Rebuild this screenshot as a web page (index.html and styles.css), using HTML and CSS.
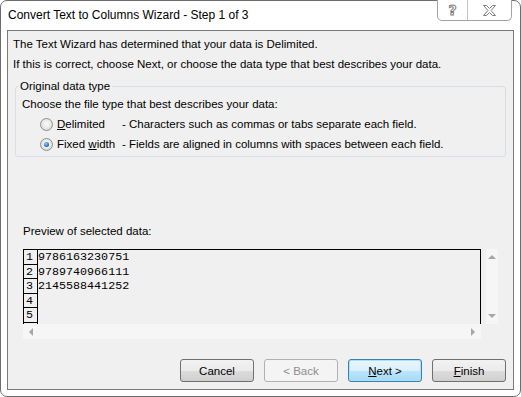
FILE: index.html
```html
<!DOCTYPE html>
<html lang="en">
<head>
    <meta charset="UTF-8">
    <title>Convert Text to Columns Wizard - Step 1 of 3</title>
    <link rel="stylesheet" href="styles.css">
</head>
<body>
    <div class="window">
        <!-- Title bar -->
        <div class="titlebar">
            <div class="title">Convert Text to Columns Wizard - Step 1 of 3</div>
            <div class="caption-buttons">
                <div class="cap help">?</div>
                <div class="cap close">
                    <svg width="13" height="11" viewBox="0 0 13 11">
                        <polygon points="0.5,0.5 3.5,0.5 6.5,3.5 9.5,0.5 12.5,0.5 8,5.5 12.5,10.5 9.5,10.5 6.5,7.5 3.5,10.5 0.5,10.5 5,5.5" fill="#fff" stroke="#7d7d7d" stroke-width="1"/>
                    </svg>
                </div>
            </div>
        </div>

        <div class="client">
            <div class="intro">
                <p>The Text Wizard has determined that your data is Delimited.</p>
                <p>If this is correct, choose Next, or choose the data type that best describes your data.</p>
            </div>

            <fieldset class="group">
                <legend>Original data type</legend>
                <p>Choose the file type that best describes your data:</p>
                <div class="option">
                    <span class="radio"></span>
                    <span class="opt-label"><u>D</u>elimited</span>
                    <span>- Characters such as commas or tabs separate each field.</span>
                </div>
                <div class="option">
                    <span class="radio on"></span>
                    <span class="opt-label">Fixed <u>w</u>idth</span>
                    <span>- Fields are aligned in columns with spaces between each field.</span>
                </div>
            </fieldset>

            <p class="preview-label">Preview of selected data:</p>

            <div class="preview">
                <div class="data">
                    <div class="line-nums">
                        <div>1</div>
                        <div>2</div>
                        <div>3</div>
                        <div>4</div>
                        <div>5</div>
                    </div>
                    <div class="lines">
                        <div>9786163230751</div>
                        <div>9789740966111</div>
                        <div>2145588441252</div>
                    </div>
                </div>
                <div class="vscroll">
                    <span class="arrow up"></span>
                    <span class="arrow down"></span>
                </div>
                <div class="hscroll">
                    <span class="arrow left"></span>
                    <span class="arrow right"></span>
                </div>
            </div>

            <div class="buttons">
                <button class="btn">Cancel</button>
                <button class="btn" disabled>&lt; Back</button>
                <button class="btn default"><u>N</u>ext &gt;</button>
                <button class="btn"><u>F</u>inish</button>
            </div>
        </div>
    </div>
</body>
</html>
```

FILE: styles.css
```css
body {
    margin: 0;
    font-family: "Liberation Sans", Arial, sans-serif;
    font-size: 11.5px;
    color: #000;
    background: #fff;
}
p {
    margin: 0;
}
.window {
    width: 521px;
    height: 397px;
    box-sizing: border-box;
    border: 1px solid #6d6d6d;
    border-radius: 7px;
    background: #fff;
    display: flex;
    flex-direction: column;
}
.titlebar {
    height: 29px;
    display: flex;
    align-items: flex-start;
}
.title {
    font-size: 12px;
    line-height: 28px;
    padding-left: 7px;
}
.caption-buttons {
    margin-left: auto;
    margin-right: 8px;
    margin-top: -1px;
    display: flex;
    height: 20px;
    border: 1px solid #a3a3a3;
    border-top: none;
    border-radius: 0 0 5px 5px;
    background: #fff;
}
.cap {
    display: flex;
    align-items: center;
    justify-content: center;
}
.help {
    width: 29px;
    font-family: "DejaVu Sans", sans-serif;
    font-size: 14px;
    font-weight: bold;
    color: #fff;
    -webkit-text-stroke: 1px #7d7d7d;
}
.close {
    width: 43px;
    border-left: 1px solid #c4c4c4;
}

/* client area */
.client {
    margin: 0 6px;
    height: 360px;
    box-sizing: border-box;
    border: 1px solid #7a7a7a;
    background: #f0f0f0;
    display: flex;
    flex-direction: column;
}
.intro {
    padding: 3px 0 0 5px;
    line-height: 20px;
}
.group {
    margin: 5px 7px 0 7px;
    padding: 1px 6px 2px 6px;
    border: 1px solid #d5dfe5;
    border-radius: 3px;
    line-height: 20px;
}
.group legend {
    padding: 0 2px;
    margin-left: -4px;
    line-height: 14px;
}
.option {
    display: flex;
    align-items: center;
    padding-left: 18px;
    height: 20px;
}
.radio {
    width: 13px;
    height: 13px;
    box-sizing: border-box;
    border: 1px solid #8e8f8f;
    border-radius: 50%;
    background: radial-gradient(circle at 50% 45%, #fbfbfb 0%, #e6e6e6 55%, #cfcfcf 100%);
    margin-right: 4px;
    display: flex;
    align-items: center;
    justify-content: center;
}
.radio.on::after {
    content: "";
    width: 5px;
    height: 5px;
    border-radius: 50%;
    background: radial-gradient(circle at 40% 35%, #8fd0ff 0%, #2b73c4 60%, #13427f 100%);
}
.opt-label {
    width: 65px;
}
.preview-label {
    margin: 64px 0 0 15px;
    line-height: 20px;
}

/* preview box */
.preview {
    margin: 8px 0 0 15px;
    width: 475px;
    display: grid;
    grid-template-columns: 458px 17px;
    grid-template-rows: 75px 15px;
}
.data {
    box-sizing: border-box;
    border: 1px solid #000;
    border-bottom: none;
    display: flex;
    overflow: hidden;
    font-family: "Liberation Mono", "Courier New", monospace;
    font-size: 11.7px;
}
.line-nums {
    width: 13px;
    border-right: 1px solid #000;
}
.line-nums div {
    height: 14.5px;
    box-sizing: border-box;
    border-bottom: 1px solid #000;
    line-height: 15px;
    padding-left: 2px;
}
.lines div {
    height: 14.5px;
    line-height: 15px;
}
.vscroll {
    margin-left: 5px;
    background: #f6f6f6;
    display: flex;
    flex-direction: column;
    justify-content: space-between;
    align-items: center;
    padding: 6px 0 6px;
}
.hscroll {
    background: #f6f6f6;
    display: flex;
    justify-content: space-between;
    align-items: center;
    padding: 0 6px;
}
.arrow {
    width: 0;
    height: 0;
    border: 4px solid transparent;
}
.arrow.up {
    border-bottom-color: #a6a6a6;
    border-top-width: 0;
}
.arrow.down {
    border-top-color: #a6a6a6;
    border-bottom-width: 0;
}
.arrow.left {
    border-right-color: #a6a6a6;
    border-left-width: 0;
}
.arrow.right {
    border-left-color: #a6a6a6;
    border-right-width: 0;
}

/* buttons */
.buttons {
    margin-top: auto;
    display: flex;
    justify-content: flex-end;
    gap: 10px;
    padding: 0 7px 7px 0;
}
.btn {
    width: 74px;
    height: 23px;
    font-family: inherit;
    font-size: 11.5px;
    color: #000;
    border: 1px solid #707070;
    border-radius: 3px;
    background: linear-gradient(#f2f2f2 0%, #ebebeb 50%, #dddddd 51%, #cfcfcf 100%);
    padding: 0;
}
.btn:disabled {
    color: #8d8d8d;
    border-color: #adb2b5;
    background: #f4f4f4;
}
.btn.default {
    border-color: #3c7fb1;
    background: linear-gradient(#eaf6fd 0%, #d9f0fc 50%, #bee6fd 51%, #a7d9f5 100%);
    box-shadow: inset 0 0 0 1px #a7e2fa;
}
```
